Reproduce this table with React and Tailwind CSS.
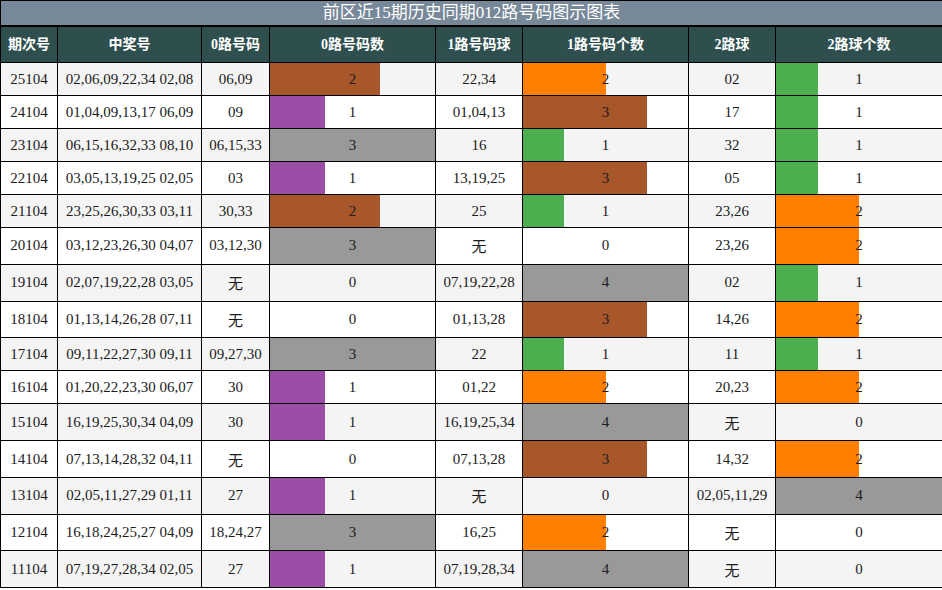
import React from 'react';

const rows = [
  ['25104', '02,06,09,22,34 02,08', '06,09', 2, '22,34', 2, '02', 1],
  ['24104', '01,04,09,13,17 06,09', '09', 1, '01,04,13', 3, '17', 1],
  ['23104', '06,15,16,32,33 08,10', '06,15,33', 3, '16', 1, '32', 1],
  ['22104', '03,05,13,19,25 02,05', '03', 1, '13,19,25', 3, '05', 1],
  ['21104', '23,25,26,30,33 03,11', '30,33', 2, '25', 1, '23,26', 2],
  ['20104', '03,12,23,26,30 04,07', '03,12,30', 3, '无', 0, '23,26', 2],
  ['19104', '02,07,19,22,28 03,05', '无', 0, '07,19,22,28', 4, '02', 1],
  ['18104', '01,13,14,26,28 07,11', '无', 0, '01,13,28', 3, '14,26', 2],
  ['17104', '09,11,22,27,30 09,11', '09,27,30', 3, '22', 1, '11', 1],
  ['16104', '01,20,22,23,30 06,07', '30', 1, '01,22', 2, '20,23', 2],
  ['15104', '16,19,25,30,34 04,09', '30', 1, '16,19,25,34', 4, '无', 0],
  ['14104', '07,13,14,28,32 04,11', '无', 0, '07,13,28', 3, '14,32', 2],
  ['13104', '02,05,11,27,29 01,11', '27', 1, '无', 0, '02,05,11,29', 4],
  ['12104', '16,18,24,25,27 04,09', '18,24,27', 3, '16,25', 2, '无', 0],
  ['11104', '07,19,27,28,34 02,05', '27', 1, '07,19,28,34', 4, '无', 0],
];

// bar colours by column: index = count
const zeroColors = ['', '#9b4ea6', '#a8572b', '#999999'];
const fourColors = ['', '#4caf4f', '#ff8000', '#a8572b', '#999999'];

const headers = ['期次号', '中奖号', '0路号码', '0路号码数', '1路号码球', '1路号码个数', '2路球', '2路球个数'];
const widths = ['w-[57px]', 'w-[144px]', 'w-[68px]', 'w-[166px]', 'w-[87px]', 'w-[166px]', 'w-[87px]', 'w-[167px]'];

const font = { fontFamily: '"Liberation Serif", "Noto Sans CJK SC", serif' };

const cell = 'border border-black py-[7.4px] text-center leading-[normal]';

const BarCell = ({ value, max, colors }) => (
  <td className={`relative px-0 ${cell}`}>
    {value > 0 && (
      <div
        className="absolute left-0 top-0 bottom-0"
        style={{ width: `${(value / max) * 100}%`, background: colors[value] }}
      />
    )}
    <span className="relative">{value}</span>
  </td>
);

export default function App() {
  return (
    <div className="w-[942px] bg-white" style={font}>
      <table className="w-[942px] table-fixed border-collapse text-[15px] text-[#1c1c1c]">
        <colgroup>
          {widths.map((w, i) => (
            <col key={i} className={w} />
          ))}
        </colgroup>
        <thead>
          <tr>
            <th colSpan={8} className="border border-black bg-[#778899] py-0 text-[17px] font-normal leading-[24px] text-white">
              前区近15期历史同期012路号码图示图表
            </th>
          </tr>
          <tr>
            {headers.map((h) => (
              <th
                key={h}
                className="border border-black border-t-2 bg-[#2f4f4f] py-[7px] text-[14px] font-bold text-white"
              >
                {h}
              </th>
            ))}
          </tr>
        </thead>
        <tbody>
          {rows.map((r, i) => (
            <tr key={r[0]} className={`h-[33px] ${i % 2 === 0 ? 'bg-[#f4f4f4]' : 'bg-white'}`}>
              <td className={cell}>{r[0]}</td>
              <td className={cell}>{r[1]}</td>
              <td className={cell}>{r[2]}</td>
              <BarCell value={r[3]} max={3} colors={zeroColors} />
              <td className={cell}>{r[4]}</td>
              <BarCell value={r[5]} max={4} colors={fourColors} />
              <td className={cell}>{r[6]}</td>
              <BarCell value={r[7]} max={4} colors={fourColors} />
            </tr>
          ))}
        </tbody>
      </table>
    </div>
  );
}
